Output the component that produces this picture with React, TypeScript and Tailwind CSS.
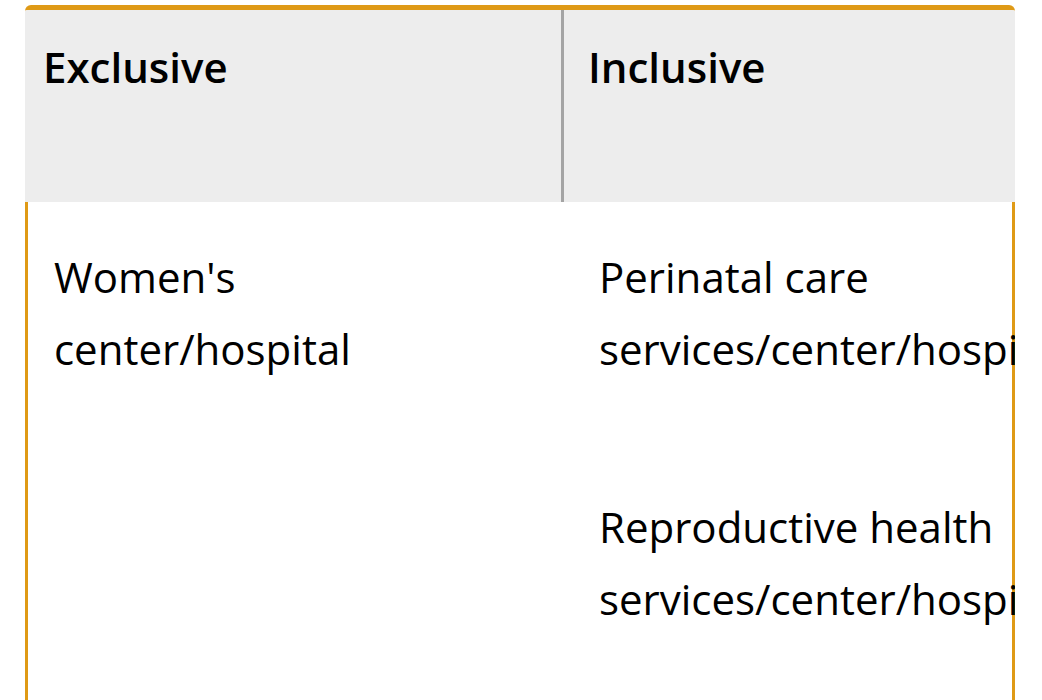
const rows = {
  exclusive: ["Women's center/hospital"],
  inclusive: ["Perinatal care services/center/hospital", "Reproductive health services/center/hospital"],
};

export default function App() {
  return (
    <div className="h-[700px] overflow-hidden bg-white pt-[5px] text-black [font-family:'Open_Sans',sans-serif]">
      <div className="ml-[25px] w-[990px] overflow-hidden rounded-t-[6px] border-t-[5px] border-[#df9a16]">
        {/* header */}
        <div className="flex h-[192px] bg-[#ededed] text-[42px] font-semibold leading-[72px]">
          <div className="w-[536px] pl-[18px] pt-[21px]">Exclusive</div>
          <div className="w-[3px] bg-[#a4a4a4]" />
          <div className="flex-1 pl-[24px] pt-[21px]">Inclusive</div>
        </div>
        {/* body */}
        <div className="flex h-[500px] border-x-[3px] border-[#df9a16] text-[42px] leading-[72px]">
          <div className="w-[533px] pl-[26px] pr-[40px] pt-[39px]">
            {rows.exclusive.map((t) => (
              <p key={t}>{t}</p>
            ))}
          </div>
          <div className="w-[451px] pl-[38px] pr-[10px] pt-[39px]">
            {rows.inclusive.map((t, i) => (
              <p key={t} className={i > 0 ? "mt-[106px]" : ""}>
                {t}
              </p>
            ))}
          </div>
        </div>
      </div>
    </div>
  );
}
